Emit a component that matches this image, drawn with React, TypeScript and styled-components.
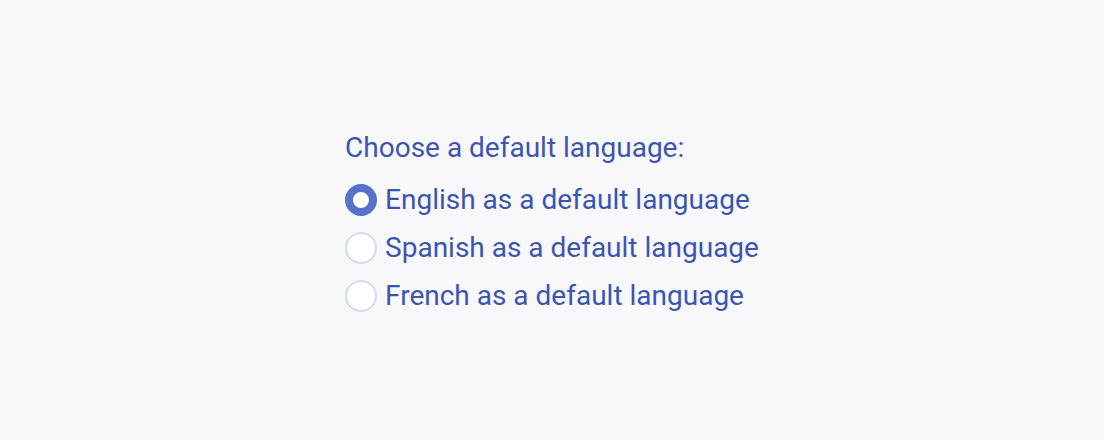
import React, { useState } from "react";
import styled, { createGlobalStyle } from "styled-components";

const GlobalStyle = createGlobalStyle`
  html, body { margin: 0; padding: 0; background: #f8f8fb; }
  body { font-family: Roboto, "Noto Sans", sans-serif; }
`;

const Page = styled.div`
  width: 1104px;
  height: 440px;
  box-sizing: border-box;
  padding-top: 4px;
  display: flex;
  align-items: center;
  justify-content: center;
  background: #f8f8fb;
`;

const Group = styled.fieldset`
  border: 0;
  margin: 0;
  padding: 0;
  display: flex;
  flex-direction: column;
  gap: 16px;
`;

const Legend = styled.div`
  font-size: 28px;
  line-height: 32px;
  color: #3b55b0;
  margin-bottom: 4px;
`;

const Option = styled.label`
  display: flex;
  align-items: center;
  gap: 8px;
  cursor: pointer;
  font-size: 28px;
  line-height: 32px;
  color: #3b55b0;
`;

const Radio = styled.input.attrs({ type: "radio" })`
  appearance: none;
  margin: 0;
  width: 32px;
  height: 32px;
  border-radius: 50%;
  box-sizing: border-box;
  background: #ffffff;
  border: 2px solid #d2dbee;
  flex-shrink: 0;
  cursor: pointer;
  &:checked {
    border: 8.5px solid #5673c9;
  }
`;

const options = [
  { id: "en", label: "English as a default language" },
  { id: "es", label: "Spanish as a default language" },
  { id: "fr", label: "French as a default language" },
];

export default function App() {
  const [value, setValue] = useState("en");
  return (
    <>
      <GlobalStyle />
      <Page>
        <Group>
          <Legend>Choose a default language:</Legend>
          {options.map((o) => (
            <Option key={o.id}>
              <Radio
                name="lang"
                value={o.id}
                checked={value === o.id}
                onChange={() => setValue(o.id)}
              />
              {o.label}
            </Option>
          ))}
        </Group>
      </Page>
    </>
  );
}
